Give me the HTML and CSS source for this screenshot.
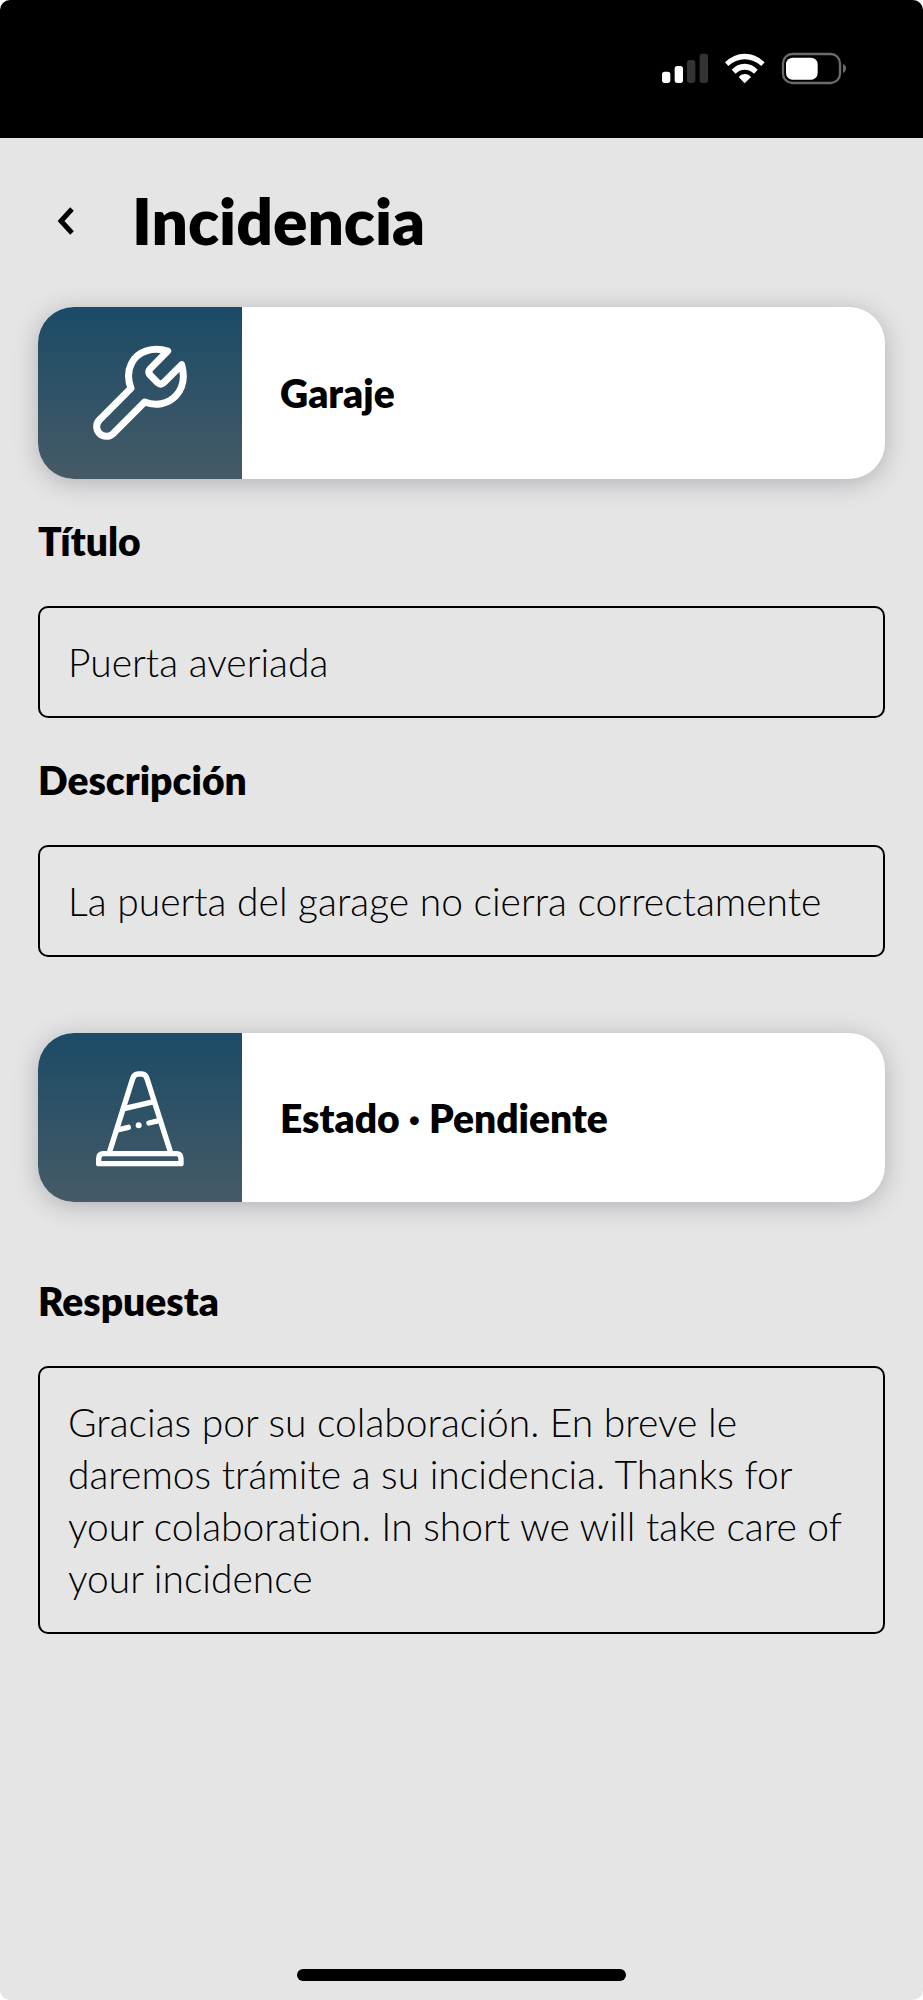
FILE: index.html
```
<!DOCTYPE html>
<html lang="es">
<head>
  <meta charset="UTF-8">
  <meta name="viewport" content="width=device-width, initial-scale=1.0">
  <title>Incidencia</title>
  <link rel="stylesheet" href="styles.css">
</head>
<body>
<div class="phone">
  <div class="status-bar">
    <svg width="190" height="40" viewBox="60 60 570 120" fill="#fff">
      <rect x="66" y="125" width="25" height="34" rx="8"/>
      <rect x="104" y="108" width="25" height="51" rx="8"/>
      <rect x="141" y="90" width="25" height="69" rx="8" fill="#333"/>
      <rect x="179" y="71" width="25" height="88" rx="8" fill="#333"/>
      <path d="M255 97 Q281 71 314 71 Q348 71 374 97 L364 108 Q341 88 314 88 Q287 88 265 108Z"/>
      <path d="M275 119 Q291 101 314 101 Q337 101 353 119 L342 131 Q330 119 314 119 Q298 119 287 131Z"/>
      <path d="M296 141 Q303 132 314 132 Q326 132 333 141 L314 160Z"/>
      <rect x="429" y="72" width="171" height="87" rx="28" fill="none" stroke="#6b6b6b" stroke-width="7"/>
      <rect x="438" y="83" width="95" height="66" rx="20"/>
      <path d="M609 102 Q618 106 618 115 Q618 125 609 129Z" fill="#6b6b6b"/>
    </svg>
  </div>

  <header>
    <button class="back" type="button" aria-label="Volver">
      <svg width="18" height="32" viewBox="0 0 18 32" fill="none" stroke="#000" stroke-width="5">
        <path d="M15 4 L4 16 L15 28"/>
      </svg>
    </button>
    <h1>Incidencia</h1>
  </header>

  <main>
    <div class="card">
      <div class="icon">
        <svg width="100" height="100" viewBox="210 160 300 300" fill="none" stroke="#fff" stroke-width="21" stroke-linejoin="round">
          <path d="M443 184 C400 170 352 184 334 222 C322 246 324 272 333 296 L238 391 A29 29 0 0 0 279 432 L374 337 C406 350 444 344 468 318 C490 294 495 262 485 225 L431 279 Q422 287 413 279 L391 257 Q382 247 391 237 Z"/>
        </svg>
      </div>
      <h2>Garaje</h2>
    </div>

    <div class="field">
      <label for="titulo">Título</label>
      <input id="titulo" type="text" value="Puerta averiada" readonly>
    </div>

    <div class="field">
      <label for="descripcion">Descripción</label>
      <input id="descripcion" type="text" value="La puerta del garage no cierra correctamente" readonly>
    </div>

    <div class="card estado">
      <div class="icon">
        <svg width="100" height="100" viewBox="210 170 300 300" fill="none" stroke="#fff" stroke-width="16" stroke-linejoin="round">
          <path d="M268 424 L338 202 Q342 188 354 188 H366 Q377 188 381 202 L452 424"/>
          <path d="M236 457 V442 Q236 427 250 427 H469 Q483 427 483 442 V457Z"/>
          <path d="M312 292 L402 271"/>
          <path d="M292 356 L325 348 M387 335 L420 327" stroke-linecap="round"/>
          <circle cx="356" cy="342" r="9" fill="#fff" stroke="none"/>
        </svg>
      </div>
      <h2>Estado · Pendiente</h2>
    </div>

    <div class="field respuesta">
      <label for="respuesta">Respuesta</label>
      <textarea id="respuesta" rows="4" readonly>Gracias por su colaboración. En breve le daremos trámite a su incidencia. Thanks for your colaboration. In short we will take care of your incidence</textarea>
    </div>
  </main>

  <div class="home-bar"></div>
</div>
</body>
</html>
```
FILE: styles.css
```
* {
  box-sizing: border-box;
}

body {
  margin: 0;
  background-color: #fff;
  color: #000;
  font-family: Lato, "Liberation Sans", sans-serif;
  font-variant-ligatures: none;
}

.phone {
  display: flex;
  flex-direction: column;
  min-height: 100vh;
  background-color: #e5e5e5;
  border-radius: 10px;
  overflow: hidden;
}

.status-bar {
  display: flex;
  justify-content: flex-end;
  height: 138px;
  padding: 50px 73px 0 0;
  background-color: #000;
}

header {
  display: flex;
  align-items: center;
  gap: 38px;
  padding: 43px 38px 46px;
}

.back {
  display: flex;
  justify-content: center;
  width: 56px;
  padding: 0;
  border: none;
  background: none;
  cursor: pointer;
}

h1 {
  margin: 0;
  font-size: 64px;
  font-weight: 800;
  line-height: 80px;
}

main {
  flex: 1;
  padding: 0 38px;
}

.card {
  display: flex;
  height: 172px;
  background-color: #fff;
  border-radius: 36px;
  box-shadow: 0 4px 24px rgba(60, 60, 80, 0.3);
  overflow: hidden;
}

.card .icon {
  display: flex;
  align-items: center;
  justify-content: center;
  width: 204px;
  background: linear-gradient(#1b4b66, #465a66);
}

.card h2 {
  margin: 0;
  padding-left: 38px;
  align-self: center;
  font-size: 39px;
  font-weight: 800;
  line-height: 48px;
}

.estado {
  height: 169px;
  margin-top: 76px;
}

.field {
  display: flex;
  flex-direction: column;
  gap: 41px;
  padding-top: 38px;
}

.respuesta {
  padding-top: 75px;
}

label {
  font-size: 39px;
  font-weight: 800;
  line-height: 48px;
}

input,
textarea {
  display: block;
  width: 100%;
  margin: 0;
  padding: 28px;
  border: 2px solid #000;
  border-radius: 10px;
  background: none;
  color: #000;
  font-family: inherit;
  font-size: 39px;
  font-weight: 300;
  font-variant-ligatures: inherit;
  line-height: 52px;
  outline: none;
  resize: none;
  overflow: hidden;
}

input {
  height: 112px;
}

.home-bar {
  width: 329px;
  height: 12px;
  margin: 0 auto 19px;
  border-radius: 6px;
  background-color: #000;
}
```
